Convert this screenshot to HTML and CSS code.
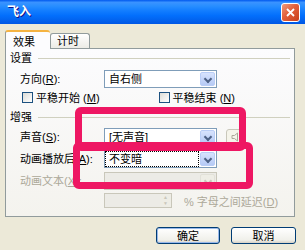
FILE: index.html
```html
<!DOCTYPE html>
<html lang="zh-CN">
<head>
  <meta charset="UTF-8" />
  <title>飞入</title>
  <link rel="stylesheet" href="styles.css">
</head>
<body>
  <div class="window">
    <div class="titlebar">
      <span class="title">飞入</span>
      <button class="close">
        <svg width="9" height="9" viewBox="0 0 9 9"><path d="M1 1L8 8M8 1L1 8" stroke="#fff" stroke-width="1.8"/></svg>
      </button>
    </div>

    <div class="content">
      <div class="tabs">
        <div class="tab active">效果</div>
        <div class="tab">计时</div>
      </div>

      <div class="panel">
        <div class="group-head"><span>设置</span><i class="rule"></i></div>
        <div class="row row-dir">
          <label>方向(<u>R</u>):</label>
          <div class="combo"><span class="val">自右侧</span><span class="drop"></span></div>
        </div>
        <div class="row checks">
          <div class="check"><span class="box"></span><span>平稳开始 (<u>M</u>)</span></div>
          <div class="check second"><span class="box"></span><span>平稳结束 (<u>N</u>)</span></div>
        </div>

        <div class="group-head head2"><span>增强</span><i class="rule"></i></div>
        <div class="row row-first">
          <label>声音(<u>S</u>):</label>
          <div class="combo"><span class="val">[无声音]</span><span class="drop"></span></div>
          <button class="speaker">
            <svg width="12" height="12" viewBox="0 0 12 12"><path d="M2 4.5h2.5L7.5 2v8L4.5 7.5H2z" fill="none" stroke="#aca899"/></svg>
          </button>
        </div>
        <div class="row">
          <label>动画播放后(<u>A</u>):</label>
          <div class="combo"><span class="val focus">不变暗</span><span class="drop"></span></div>
        </div>
        <div class="row disabled">
          <label>动画文本(<u>X</u>):</label>
          <div class="combo off"><span class="val"></span><span class="drop"></span></div>
        </div>
        <div class="row spin-row disabled">
          <div class="spin"><span class="num"></span><span class="arrows"><i>▲</i><i>▼</i></span></div>
          <span class="note">% 字母之间延迟(<u>D</u>)</span>
        </div>
      </div>

      <div class="buttons">
        <button class="btn default">确定</button>
        <button class="btn">取消</button>
      </div>
    </div>

    <div class="mark mark-one"></div>
    <div class="mark mark-two"></div>
  </div>
</body>
</html>
```

FILE: styles.css
```css
:root {
  --face: #ece9d8;
  --edge: #919b9c;
  --field: #7f9db9;
  --grey: #aca899;
  --pen: #ee1763;
  --font: "Liberation Sans", "Noto Sans CJK SC", sans-serif;
}

* {
  box-sizing: border-box;
  margin: 0;
  padding: 0;
}

body {
  width: 305px;
  height: 250px;
  overflow: hidden;
  background: var(--face);
  font: 11px/14px var(--font);
  color: #000;
}

.window {
  position: relative;
  width: 305px;
  height: 250px;
}

.titlebar {
  height: 24px;
  display: flex;
  align-items: center;
  justify-content: space-between;
  padding: 0 5px 0 7px;
  background: linear-gradient(#0058ee 0%, #3a93ff 10%, #288eff 25%, #127dff 45%, #036ffc 65%, #0262ee 85%, #0057e5 100%);
}

.title {
  color: #fff;
  font-weight: bold;
  font-size: 12px;
  text-shadow: 1px 1px #0f1089;
}

.close {
  width: 19px;
  height: 19px;
  display: flex;
  align-items: center;
  justify-content: center;
  border: 1px solid #fff;
  border-radius: 3px;
  background: linear-gradient(135deg, #f09a7c, #e2603b 45%, #c8401b);
}

.content {
  padding: 6px 10px 0 5px;
}

.tabs {
  display: flex;
  align-items: flex-end;
  height: 18px;
  position: relative;
  z-index: 1;
}

.tab {
  width: 40px;
  height: 15px;
  line-height: 14px;
  padding-left: 6px;
  border: 1px solid var(--edge);
  border-bottom: none;
  border-radius: 3px 3px 0 0;
  background: linear-gradient(#fff, #ecebe6);
}

.tab.active {
  width: 45px;
  height: 19px;
  margin-bottom: -1px;
  padding: 3px 0 0 7px;
  line-height: 14px;
  background: #fcfcfe;
  border-top: 2px solid #f5b341;
  border-right: none;
}

.panel {
  width: 290px;
  height: 169px;
  padding: 2px 4px 0;
  border: 1px solid var(--edge);
  background: linear-gradient(#fcfcfe, #f4f3ee);
}

.group-head {
  height: 14px;
  display: flex;
  align-items: center;
  gap: 6px;
}

.group-head.head2 {
  margin-top: 6px;
}

.rule {
  flex: 1;
  height: 1px;
  background: #d0d0bf;
}

.row {
  display: flex;
  align-items: center;
  height: 18px;
  margin-top: 4px;
  padding-left: 10px;
}

.row-dir {
  margin-top: 5px;
}

.row label {
  width: 84px;
}

u {
  text-decoration: underline;
}

.combo {
  width: 113px;
  height: 18px;
  display: flex;
  align-items: center;
  padding: 1px;
  border: 1px solid var(--field);
  background: #fff;
}

.combo .val {
  flex: 1;
  height: 14px;
  padding-left: 3px;
  line-height: 14px;
}

.combo .val.focus {
  outline: 1px dotted #000;
  margin-right: 2px;
}

.drop {
  width: 15px;
  height: 14px;
  border: 1px solid #b9cdf6;
  border-radius: 2px;
  background: linear-gradient(#d7e3fd, #b6caf5) no-repeat;
  position: relative;
}

.drop::after {
  content: "";
  position: absolute;
  left: 4px;
  top: 3px;
  width: 4px;
  height: 4px;
  border-right: 2px solid #4d6185;
  border-bottom: 2px solid #4d6185;
  transform: rotate(45deg);
}

.combo.off {
  border-color: #c9c7ba;
  background: #ecebe6;
}

.combo.off .drop {
  border-color: #e2e1d8;
  background: #eeede5;
}

.combo.off .drop::after {
  border-color: #c9c7ba;
}

.speaker {
  width: 20px;
  height: 17px;
  margin-left: 9px;
  display: flex;
  align-items: center;
  justify-content: center;
  border: 1px solid #c9c7ba;
  border-radius: 3px;
  background: #f5f4ea;
}

.checks {
  height: 13px;
  margin-top: 3px;
  padding-left: 12px;
}

.check {
  display: flex;
  align-items: center;
  gap: 3px;
}

.check.second {
  margin-left: 59px;
}

.box {
  width: 11px;
  height: 11px;
  border: 1px solid #1c5180;
  background: linear-gradient(135deg, #dcdcd7, #fff);
}

.disabled {
  color: var(--grey);
}

.spin-row {
  height: 15px;
  margin-top: 3px;
  padding-left: 94px;
}

.spin {
  width: 68px;
  height: 15px;
  display: flex;
  justify-content: flex-end;
  border: 1px solid #c9c7ba;
  background: #ecebe6;
}

.arrows {
  width: 11px;
  display: flex;
  flex-direction: column;
  font-size: 5px;
  line-height: 6px;
  text-align: center;
  color: #c9c7ba;
  background: #eeede5;
}

.note {
  margin-left: 12px;
  margin-top: 2px;
}

.buttons {
  display: flex;
  justify-content: flex-end;
  gap: 11px;
  margin: 10px -1px 0 0;
}

.btn {
  width: 65px;
  height: 17px;
  font: 11px/14px var(--font);
  border: 1px solid #003c74;
  border-radius: 3px;
  background: linear-gradient(#fff, #f0f0ea 80%, #d6d0c5);
}

.btn.default {
  width: 64px;
  box-shadow: inset 0 0 0 1px #98b8ea;
}

.mark {
  position: absolute;
  border: 7px solid var(--pen);
  border-radius: 6px;
}

.mark-one {
  left: 75px;
  top: 107px;
  width: 171px;
  height: 44px;
}

.mark-two {
  left: 73px;
  top: 142px;
  width: 180px;
  height: 47px;
}
```
